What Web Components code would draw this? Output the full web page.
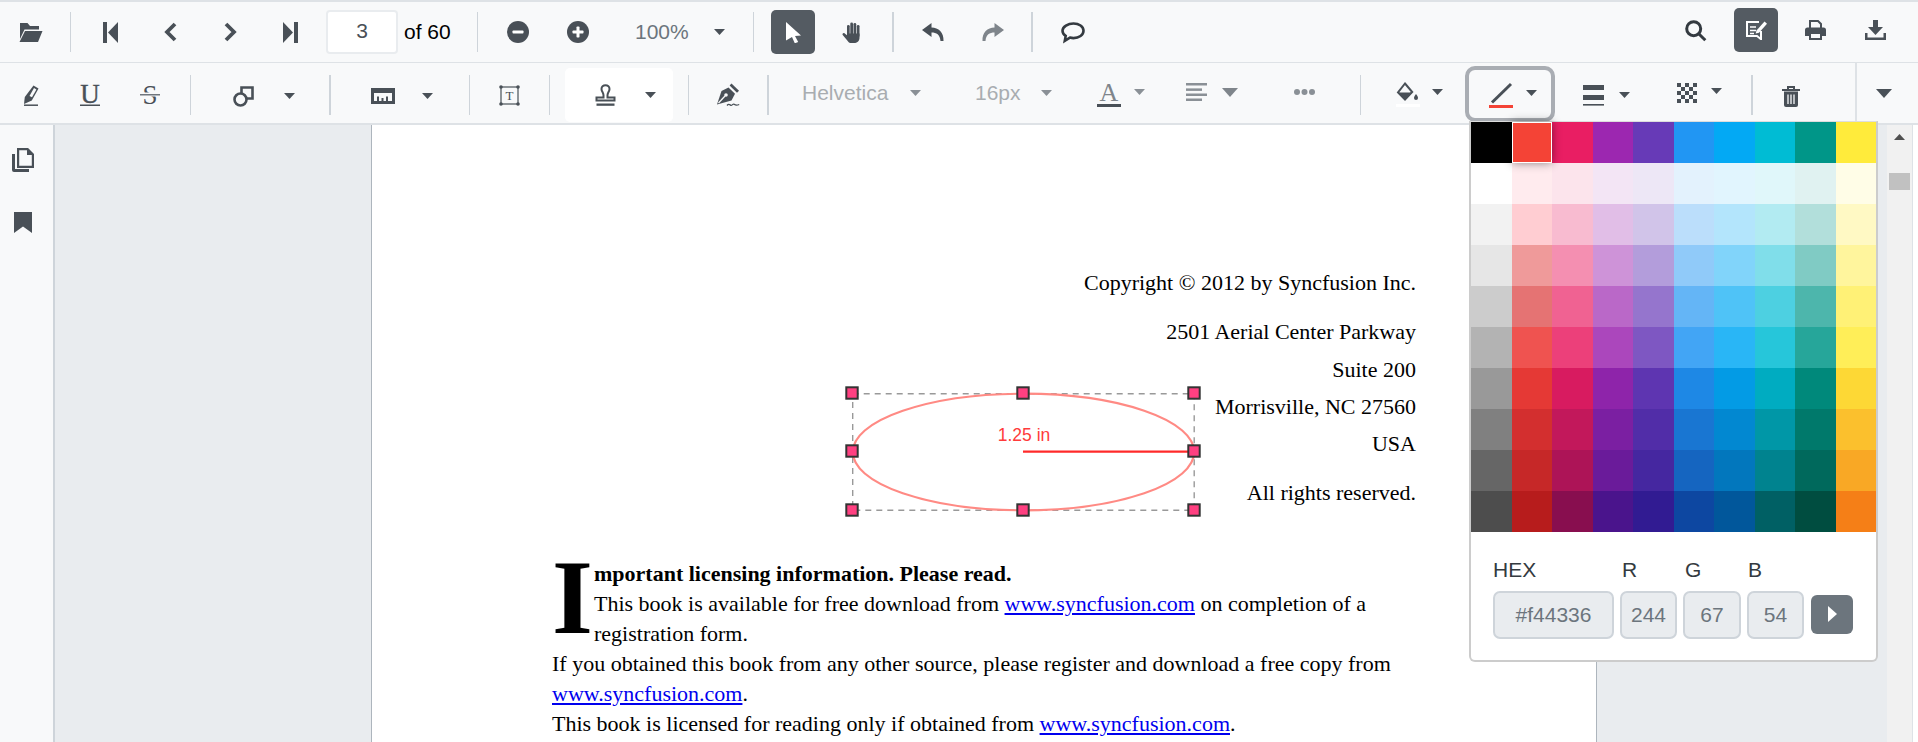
<!DOCTYPE html>
<html><head><meta charset="utf-8"><title>PDF Viewer</title>
<style>html,body{margin:0;padding:0;height:742px;overflow:hidden;background:#fff;font-family:"Liberation Sans",Arial,sans-serif}</style>
</head><body>
<pv-app></pv-app>
<script>
const D='#495057';
const ICONS={
 open:[24,20,`<path fill="${D}" d="M1 1h7.5l2.5 3h9v3.5H5.5L1 17z"/><path fill="${D}" d="M6 9h17.5L19 20H0.5z"/>`],
 first:[15,21,`<rect width="4" height="21" fill="${D}"/><path fill="${D}" d="M15 0v21L5 10.5z"/>`],
 last:[15,21,`<rect x="11" width="4" height="21" fill="${D}"/><path fill="${D}" d="M0 0v21l10-10.5z"/>`],
 prev:[13,20,`<path fill="none" stroke="${D}" stroke-width="3.8" d="M11 2 3 10l8 8"/>`],
 next:[13,20,`<path fill="none" stroke="${D}" stroke-width="3.8" d="M2 2l8 8-8 8"/>`],
 zout:[22,22,`<circle cx="11" cy="11" r="11" fill="${D}"/><rect x="5.5" y="9.5" width="11" height="3" rx=".8" fill="#fff"/>`],
 zin:[22,22,`<circle cx="11" cy="11" r="11" fill="${D}"/><rect x="5.5" y="9.5" width="11" height="3" rx=".8" fill="#fff"/><rect x="9.5" y="5.5" width="3" height="11" rx=".8" fill="#fff"/>`],
 arrow:[11,6,`<path fill="${D}" d="M0 0h11L5.5 6z"/>`],
 arrowg:[11,6,`<path fill="#8a9096" d="M0 0h11L5.5 6z"/>`],
 arrowb:[16,9,`<path fill="#7f858b" d="M0 0h16L8 9z"/>`],
 arrowx:[16,9,`<path fill="${D}" d="M0 0h16L8 9z"/>`],
 cursor:[15,21,`<path fill="#fff" d="M0 0l15 13.5-6 .6 3.2 6-3.4 1.2L6 15l-6 3.5z"/>`],
 hand:[20,21,`<g fill="${D}"><rect x="5" y="3" width="2.7" height="11" rx="1.3"/><rect x="8.3" y=".5" width="2.7" height="13" rx="1.3"/><rect x="11.5" y="1" width="2.7" height="13" rx="1.3"/><rect x="14.8" y="3" width="2.7" height="12" rx="1.3"/><path d="M5 11.5h12.5V16c0 3-2.5 5-5.5 5H9.5c-2 0-3.3-1-4.2-2.6L.7 13c-.9-1.2.8-2.7 2-1.6L5 13.2z"/></g>`],
 undo:[22,18,`<path fill="${D}" d="M9.5 0 0 7l9.5 7V9.5c5 0 8.5 2 9 8.5H21.500C22 9.5 16.5 4.5 9.5 4.5z"/>`],
 redo:[22,18,`<path fill="#7f858b" d="M12.5 0 22 7l-9.5 7V9.5c-5 0-8.5 2-9 8.5H.5C0 9.5 5.5 4.5 12.5 4.5z"/>`],
 comment:[24,21,`<path fill="none" stroke="#343a40" stroke-width="2.6" d="M12.500 1.500c5.500 0 10 3 10 7.300s-4.500 7.300-10 7.300c-1.300 0-2.500-.2-3.600-.5L3.800 18.800l.9-4.900c-2-1.300-3.200-3.100-3.200-5.100 0-4.300 5.500-7.300 11-7.300z"/>`],
 search:[21,21,`<circle cx="8.700" cy="8.700" r="7" fill="none" stroke="#343a40" stroke-width="3"/><path stroke="#343a40" stroke-width="3" d="M13.500 13.500l6.800 6.800"/>`],
 edit:[21,20,`<g fill="none" stroke="#fff"><path stroke-width="2" d="M13 2H1v14h10l4 3.200V11"/><path stroke-width="1.700" d="M4 7h6M4 10.500h6M4 13.500h4"/></g><path fill="#fff" d="M10.500 10.500 18.500 1.500l2.500 2.200-8 9-3.300.9z"/>`],
 print:[21,20,`<g fill="none" stroke="${D}" stroke-width="2"><path d="M5 8V1h8l3 3v4"/><rect x="5" y="13" width="11" height="6"/></g><path fill="${D}" d="M2.500 7.500h16a2.500 2.500 0 0 1 2.500 2.500v6h-4v-4H4v4H0v-6a2.500 2.500 0 0 1 2.500-2.500z"/>`],
 download:[21,20,`<path fill="${D}" d="M8 0h5v7h5l-7.500 8L3 7h5z"/><path fill="${D}" d="M0 13h2.500v4.500h16V13H21v7H0z"/>`],
 hl:[16,21,`<path fill="${D}" d="M10.500.5 15.500 3.500 8.800 15.500 1 19 1.800 12z"/><path fill="#f8f9fa" d="M11 3 13.400 4.500 9 12.300 6.500 11z"/><path stroke="${D}" stroke-width="1.500" d="M1 20.200h14"/>`],
 u:[24,24,`<text x="12" y="20" text-anchor="middle" font-family="Liberation Serif" font-size="27" stroke="${D}" stroke-width=".35" fill="${D}">U</text><rect x="2" y="21.500" width="20" height="1.500" fill="${D}"/>`],
 s:[24,24,`<text x="12" y="20.500" text-anchor="middle" font-family="Liberation Serif" font-size="27" fill="${D}">S</text><rect x="2" y="9.500" width="20" height="4" fill="#f8f9fa"/><rect x="2" y="11" width="20" height="1.500" fill="#6f767d"/>`],
 shape:[21,21,`<g fill="none" stroke="${D}" stroke-width="2.600"><path d="M8.500 7V1.500h11v11h-6"/><circle cx="7.500" cy="13.500" r="6"/></g>`],
 ruler:[24,16,`<path fill="${D}" fill-rule="evenodd" d="M0 0h24v16H0zM3 5v8h18V5z"/><path fill="${D}" d="M6 8.500h2V13H6zM10.500 10h2v3h-2zM15 8.500h2V13h-2z"/>`],
 tbox:[21,21,`<g fill="none" stroke="${D}" stroke-width="1.200"><rect x="2" y="2" width="17" height="17"/></g><g fill="${D}"><circle cx="2" cy="2" r="1.800"/><circle cx="19" cy="2" r="1.800"/><circle cx="2" cy="19" r="1.800"/><circle cx="19" cy="19" r="1.800"/></g><text x="10.500" y="15" text-anchor="middle" font-family="Liberation Serif" font-size="13" fill="${D}">T</text>`],
 stamp:[21,22,`<path fill="none" stroke="${D}" stroke-width="2" d="M10.500 1.200c-2.300 0-4 1.700-4 3.800 0 2.600 2 3.600 2 6.300V13.500H1.500v3h18v-3h-7v-2.200c0-2.700 2-3.700 2-6.300 0-2.100-1.700-3.800-4-3.800z"/><rect x="1.500" y="19.500" width="18" height="2.300" fill="${D}"/>`],
 sign:[24,24,`<path fill="${D}" d="M15.500.5l7.500 7.300-2 1.900-7.400-7.300z"/><path fill="${D}" d="M12.500 4.500l6.500 6.300-3.500 6.700L1 21.500 5.500 8z"/><path stroke="#f8f9fa" stroke-width="1.300" d="M2.500 20 9 13"/><circle cx="10" cy="12" r="1.800" fill="#f8f9fa"/><path fill="none" stroke="${D}" stroke-width="1.300" d="M11 22.500c2-2.500 3-.2 4.200-.2s1.800-2 3-1 2 1.500 5 .2"/>`],
 tA:[24,25,`<text x="12" y="18.500" text-anchor="middle" font-family="Liberation Serif" font-size="26" fill="#7f858b">A</text><rect y="22" width="24" height="3" fill="${D}"/>`],
 align:[21,18,`<g fill="#8a9096"><rect width="21" height="2.500"/><rect y="5.400" width="16" height="2.500"/><rect y="10.500" width="21" height="2.500"/><rect y="15.500" width="16" height="2.500"/></g>`],
 dots:[21,6,`<g fill="#8a9096"><circle cx="3" cy="3" r="3"/><circle cx="10.500" cy="3" r="3"/><circle cx="18" cy="3" r="3"/></g>`],
 fill:[24,25,`<path fill="none" stroke="${D}" stroke-width="2" d="M9 1.500 16.200 10 9 17.500 2 10.500z"/><path fill="${D}" d="M2 10.500h14.500L9 18z"/><path fill="${D}" d="M20 12c1 1.500 2 2.700 2 4a2 2 0 0 1-4 0c0-1.300 1-2.500 2-4z"/><rect y="22" width="24" height="3" fill="#fff"/>`],
 line:[24,25,`<path stroke="${D}" stroke-width="3" d="M22 1 3 19.500"/><rect y="22" width="24" height="3" fill="#f44336"/>`],
 thick:[21,21,`<g fill="${D}"><rect width="21" height="5"/><rect y="10" width="21" height="5"/><rect y="19" width="21" height="1.600"/></g>`],
 checker:[20,20,`<g fill="${D}">`+[0,1,2,3,4].map(r=>[0,1,2,3,4].filter(c=>(r+c)%2==0).map(c=>`<rect x="${c*4}" y="${r*4}" width="4" height="4"/>`).join('')).join('')+`</g>`],
 trash:[18,21,`<path stroke="${D}" stroke-width="2" fill="none" d="M0 4h18M6 3.500V1h6v2.500"/><path fill="${D}" d="M2 5.500h14V19a2 2 0 0 1-2 2H4a2 2 0 0 1-2-2z"/><path stroke="#f8f9fa" stroke-width="1.300" d="M6 8.500v9.500M9 8.500v9.500M12 8.500v9.500"/>`],
 pages:[22,24,`<path fill="${D}" d="M0 6h3v15h14v3H2a2 2 0 0 1-2-2z"/><path fill="#f8f9fa" stroke="${D}" stroke-width="2.200" d="M6.100 1.100h9.500l5.300 5.300v12.500H6.100z"/><path fill="${D}" d="M15 1h1l5 5v1h-6z"/>`],
 bookmark:[18,21,`<path fill="${D}" d="M0 0h18v21l-9-6.500L0 21z"/>`],
};
class Base extends HTMLElement{
 constructor(){super();this.attachShadow({mode:'open'});}
 a(n,d){return this.hasAttribute(n)?this.getAttribute(n):d;}
 box(){const w=this.a('w');if(w)this.style.width=w+'px';const m=this.a('ml');if(m)this.style.marginLeft=m+'px';}
}
class PvTool extends Base{connectedCallback(){this.box();const ic=ICONS[this.a('i')];const dy=+this.a('dy',0);
 this.shadowRoot.innerHTML=`<style>:host{display:flex;flex:none;align-items:center;justify-content:center;height:100%}svg{display:block;margin-top:${dy*2}px;overflow:visible}</style><svg width="${ic[0]}" height="${ic[1]}" viewBox="0 0 ${ic[0]} ${ic[1]}">${ic[2]}</svg>`;}}
class PvSep extends Base{connectedCallback(){this.box();const h=this.a('h',40),t=this.a('t',1),dy=+this.a('dy',0);
 this.shadowRoot.innerHTML=`<style>:host{display:flex;flex:none;align-items:center;justify-content:center;height:100%}i{display:block;width:${t}px;height:${h}px;background:${this.a('c','#ced4da')};margin-top:${dy*2}px}</style><i></i>`;}}
class PvLabel extends Base{connectedCallback(){this.box();const c=this.a('c','#000'),dy=+this.a('dy',0);
 this.shadowRoot.innerHTML=`<style>:host{display:flex;flex:none;align-items:center;height:100%;font:21px "Liberation Sans",Arial,sans-serif;color:${c};white-space:nowrap}span{margin-top:${dy*2}px}</style><span><slot></slot></span>`;}}
class PvPageInput extends Base{connectedCallback(){this.box();
 this.shadowRoot.innerHTML=`<style>:host{display:flex;flex:none;align-items:center;justify-content:center;box-sizing:border-box;height:44px;background:#fff;border:2px solid #e9ecef;border-radius:4px;font:21px "Liberation Sans",Arial,sans-serif;color:#495057}span{margin-top:-3px}</style><span><slot></slot></span>`;}}
class PvActive extends Base{connectedCallback(){this.box();const ic=ICONS[this.a('i')];const dy=+this.a('dy',0);
 this.shadowRoot.innerHTML=`<style>:host{display:flex;flex:none;align-items:center;justify-content:center;height:44px;background:#545b62;border-radius:5px;margin-top:${dy*2}px}svg{display:block}</style><svg width="${ic[0]}" height="${ic[1]}" viewBox="0 0 ${ic[0]} ${ic[1]}">${ic[2]}</svg>`;}}
class PvToolbar extends Base{connectedCallback(){this.shadowRoot.innerHTML=`<style>:host{display:flex;align-items:center;box-sizing:border-box;height:${this.a('h',60)}px;background:#f8f9fa;border-bottom:${this.a('b',1)}px solid #dee2e6}</style><slot></slot>`;}}
class PvGroup extends Base{connectedCallback(){this.box();
 this.shadowRoot.innerHTML=`<style>:host{display:flex;flex:none;align-items:center;height:${this.a('h','100%')}${this.a('h')?'px':''};box-sizing:border-box;${this.a('css','')}}</style><slot></slot>`;}}
class PvSidebar extends Base{connectedCallback(){this.shadowRoot.innerHTML=`<style>:host{display:flex;flex:none;flex-direction:column;align-items:center;box-sizing:border-box;width:55px;background:#f8f9fa;border-right:2px solid #ced4da;padding:23px 7px 0 0;gap:40px}svg{display:block}</style>
 ${['pages','bookmark'].map(n=>`<svg width="${ICONS[n][0]}" height="${ICONS[n][1]}" viewBox="0 0 ${ICONS[n][0]} ${ICONS[n][1]}">${ICONS[n][2]}</svg>`).join('')}`;}}
class PvScrollbar extends Base{connectedCallback(){this.shadowRoot.innerHTML=`<style>:host{display:flex;flex:none;flex-direction:column;align-items:center;box-sizing:content-box;width:25px;background:#f1f1f1;border-right:1px solid #dee2e6}svg{display:block;margin-top:9px}.t{width:21px;height:17px;background:#c1c1c1;margin-top:33px}</style><svg width="11" height="6"><path d="M0 6h11L5.500 0z" fill="#505050"/></svg><div class="t"></div>`;}}
class PvPage extends Base{connectedCallback(){this.shadowRoot.innerHTML=`<style>
:host{display:block;flex:none;box-sizing:border-box;width:1226px;height:100%;background:#fff;border-left:1px solid #adb5bd;border-right:1px solid #adb5bd;padding:143px 0 0 180px;position:relative;font:22px/30px "Liberation Serif","Times New Roman",serif;color:#000;overflow:hidden}
.addr{width:864px;text-align:right}
.addr p{margin:0;white-space:nowrap}
.body{margin-top:51px;width:900px;white-space:nowrap}
.cap{float:left;width:42px;height:88px;font-weight:bold;font-size:105px;line-height:77px}
a{color:#00e;text-decoration:underline}
svg{position:absolute;left:0;top:0;overflow:visible}
</style>
<div class="addr"><p>Copyright © 2012 by Syncfusion Inc.</p><p style="margin-top:19px">2501 Aerial Center Parkway</p><p style="margin-top:8px">Suite 200</p><p style="margin-top:7px">Morrisville, NC 27560</p><p style="margin-top:7px">USA</p><p style="margin-top:19px">All rights reserved.</p></div>
<div class="body"><span class="cap">I</span><b>mportant licensing information. Please read.</b><br>This book is available for free download from <a>www.syncfusion.com</a> on completion of a<br>registration form.<br>If you obtained this book from any other source, please register and download a free copy from<br><a>www.syncfusion.com</a>.<br>This book is licensed for reading only if obtained from <a>www.syncfusion.com</a>.</div>
<svg width="1226" height="617" viewBox="372 125 1226 617">
<rect x="852.700" y="393.700" width="341.500" height="116.600" fill="none" stroke="#999" stroke-width="1.400" stroke-dasharray="6 5"/>
<ellipse cx="1023.500" cy="452" rx="170.700" ry="58.300" fill="none" stroke="#ff8a84" stroke-width="2.200"/>
<path d="M1023 451.700H1194" stroke="#ff2a2a" stroke-width="2.200"/>
<text x="1024" y="440.700" text-anchor="middle" font-family="Liberation Sans" font-size="17.500" fill="#ff3b3b">1.25 in</text>
${[[852,393],[1023,393],[1194,393],[852,451],[1194,451],[852,510],[1023,510],[1194,510]].map(p=>`<rect x="${p[0]-5.7}" y="${p[1]-5.7}" width="11.400" height="11.400" fill="#ff4081" stroke="#333" stroke-width="2"/>`).join('')}
</svg>`;}}
const PAL=[
['#000000','#f44336','#e91e63','#9c27b0','#673ab7','#2196f3','#03a9f4','#00bcd4','#009688','#ffeb3b'],
['#ffffff','#ffebee','#fce4ec','#f3e5f5','#ede7f6','#e3f2fd','#e1f5fe','#e0f7fa','#e0f2f1','#fffde7'],
['#f2f2f2','#ffcdd2','#f8bbd0','#e1bee7','#d1c4e9','#bbdefb','#b3e5fc','#b2ebf2','#b2dfdb','#fff9c4'],
['#e6e6e6','#ef9a9a','#f48fb1','#ce93d8','#b39ddb','#90caf9','#81d4fa','#80deea','#80cbc4','#fff59d'],
['#cccccc','#e57373','#f06292','#ba68c8','#9575cd','#64b5f6','#4fc3f7','#4dd0e1','#4db6ac','#fff176'],
['#b3b3b3','#ef5350','#ec407a','#ab47bc','#7e57c2','#42a5f5','#29b6f6','#26c6da','#26a69a','#ffee58'],
['#999999','#e53935','#d81b60','#8e24aa','#5e35b1','#1e88e5','#039be5','#00acc1','#00897b','#fdd835'],
['#808080','#d32f2f','#c2185b','#7b1fa2','#512da8','#1976d2','#0288d1','#0097a7','#00796b','#fbc02d'],
['#666666','#c62828','#ad1457','#6a1b9a','#4527a0','#1565c0','#0277bd','#00838f','#00695c','#f9a825'],
['#4d4d4d','#b71c1c','#880e4f','#4a148c','#311b92','#0d47a1','#01579b','#006064','#004d40','#f57f17']];
class PvPicker extends Base{connectedCallback(){this.shadowRoot.innerHTML=`<style>
:host{position:absolute;left:1469px;top:119px;width:409px;box-sizing:border-box;background:#fff;border:2px solid #ccc;border-top:1px solid #ddd;border-radius:0 0 6px 6px;z-index:5;font:21px "Liberation Sans",Arial,sans-serif}
.g{display:grid;grid-template-columns:repeat(10,40.5px);grid-auto-rows:41px}
.g i{display:block;position:relative}
.g i.s{box-shadow:0 0 9px rgba(0,0,0,.45);outline:1px solid #fff;outline-offset:-1px;z-index:1}
.low{padding:26px 0 21px 22px}
.l{display:flex;height:24px;line-height:24px;color:#343a40}
.l span{display:block}
.r{display:flex;align-items:center;margin-top:9px;height:48px}
.f{box-sizing:border-box;height:48px;display:flex;align-items:center;justify-content:center;background:#e9ecef;border:2px solid #ced4da;border-radius:7px;color:#6c757d;flex:none}
.b{width:42px;height:39px;flex:none;background:#6c757d;border-radius:6px;display:flex;align-items:center;justify-content:center;margin:-2px 0 0 7px}
</style>
<div class="g">${PAL.flat().map(c=>`<i style="background:${c}" class="${c=='#f44336'?'s':''}"></i>`).join('')}</div>
<div class="low"><div class="l"><span style="width:129px">HEX</span><span style="width:63px">R</span><span style="width:63px">G</span><span>B</span></div>
<div class="r"><div class="f" style="width:121px">#f44336</div><div class="f" style="width:57px;margin-left:6px">244</div><div class="f" style="width:58px;margin-left:6px">67</div><div class="f" style="width:57px;margin-left:6px">54</div><div class="b"><svg width="9" height="16"><path d="M0 0l9 8-9 8z" fill="#fff"/></svg></div></div></div>`;}}
class PvApp extends Base{connectedCallback(){this.shadowRoot.innerHTML=`<style>
:host{display:flex;flex-direction:column;position:relative;width:1918px;height:742px;overflow:hidden;box-sizing:border-box;border-top:2px solid #dee2e6}
.main{display:flex;flex:1;min-height:0}
.gray{flex:1;display:flex;background:#e9ecef;padding-left:316px;min-width:0}
.sp{flex:1}
.lb{align-self:flex-start;margin-top:3px;height:56px;width:90px;box-sizing:border-box;border:4px solid #a9adb3;border-radius:10px;padding-left:14px;margin-left:17px;display:flex;flex:none;align-items:center}
</style>
<pv-toolbar h="61" b="1">
<pv-tool w="61" i="open"></pv-tool><pv-sep w="18"></pv-sep>
<pv-tool w="62" i="first"></pv-tool><pv-tool w="58" i="prev"></pv-tool><pv-tool w="62" i="next"></pv-tool><pv-tool w="58" i="last"></pv-tool>
<pv-page-input w="72" ml="7">3</pv-page-input><pv-label w="60" ml="6">of 60</pv-label>
<pv-sep w="27"></pv-sep><pv-tool w="53" i="zout"></pv-tool><pv-tool w="67" i="zin"></pv-tool>
<pv-label w="54" ml="24" c="#6c757d">100%</pv-label><pv-tool w="60" i="arrow"></pv-tool><pv-sep w="9"></pv-sep>
<pv-active w="44" ml="13" i="cursor"></pv-active><pv-tool w="74" i="hand"></pv-tool><pv-sep w="8" t="2"></pv-sep>
<pv-tool w="72" i="undo"></pv-tool><pv-tool w="48" i="redo"></pv-tool><pv-sep w="30" t="2"></pv-sep><pv-tool w="51" i="comment"></pv-tool>
<span class="sp"></span>
<pv-tool w="48" i="search" dy="-2"></pv-tool><pv-active w="44" ml="15" i="edit" dy="-2"></pv-active><pv-tool w="75" i="print" dy="-2"></pv-tool><pv-tool w="45" i="download" dy="-2"></pv-tool><span style="width:20px;flex:none"></span>
</pv-toolbar>
<pv-toolbar h="62" b="2">
<pv-tool w="61" i="hl" dy="2"></pv-tool><pv-tool w="58" i="u" dy="2"></pv-tool><pv-tool w="62" i="s" dy="2"></pv-tool><pv-sep w="18" dy="1.500"></pv-sep>
<pv-tool w="61" ml="14" i="shape" dy="3"></pv-tool><pv-tool w="30" i="arrow" dy="2.500"></pv-tool><pv-sep w="52" dy="1.500" t="2"></pv-sep>
<pv-tool w="54" i="ruler" dy="3"></pv-tool><pv-tool w="34" i="arrow" dy="2.500"></pv-tool><pv-sep w="50" dy="1.500"></pv-sep>
<pv-tool w="30" i="tbox" dy="2"></pv-tool><pv-sep w="32" ml="9" dy="1.500"></pv-sep>
<pv-group w="108" h="54" css="background:#fff;border-radius:5px;margin-top:4px"><pv-tool w="80" i="stamp"></pv-tool><pv-tool w="10" i="arrow"></pv-tool></pv-group>
<pv-sep w="31" dy="1.500"></pv-sep><pv-tool w="48" i="sign" dy="2"></pv-tool><pv-sep w="32" dy="1.500" t="2"></pv-sep>
<pv-label w="86" ml="18" c="#a9adb1">Helvetica</pv-label><pv-tool w="54" i="arrowg"></pv-tool>
<pv-label w="45" ml="33" c="#a9adb1">16px</pv-label><pv-tool w="53" i="arrowg"></pv-tool>
<pv-tool w="38" ml="17" i="tA" dy="1"></pv-tool><pv-tool w="22" i="arrowg" dy="-1"></pv-tool>
<pv-tool w="53" ml="20" i="align" dy="-1"></pv-tool><pv-tool w="14" i="arrowb" dy="-1"></pv-tool>
<pv-tool w="40" ml="47" i="dots" dy="-1"></pv-tool><pv-sep w="18" ml="27" dy="1.500"></pv-sep>
<pv-tool w="38" ml="20" i="fill" dy="1"></pv-tool><pv-tool w="21" i="arrow" dy="-1"></pv-tool>
<div class="lb"><pv-tool w="36" i="line" dy="1"></pv-tool><pv-tool w="24" i="arrow" dy="-1"></pv-tool></div>
<pv-tool w="39" ml="19" i="thick" dy="2"></pv-tool><pv-tool w="22" i="arrow" dy="2"></pv-tool>
<pv-tool w="39" ml="32" i="checker"></pv-tool><pv-tool w="20" i="arrow" dy="-2"></pv-tool>
<pv-sep w="18" ml="17" t="2" dy="1.500"></pv-sep><pv-tool w="40" ml="10" i="trash" dy="3"></pv-tool>
<pv-sep w="18" ml="36" h="60" t="2" c="#dee2e6"></pv-sep><pv-tool w="38" i="arrowx"></pv-tool>
</pv-toolbar>
<div class="main"><pv-sidebar></pv-sidebar><div class="gray"><pv-page></pv-page></div><pv-scrollbar></pv-scrollbar><span style="width:5px;flex:none;background:#fff"></span></div>
<pv-picker></pv-picker>`;}}
customElements.define('pv-tool',PvTool);customElements.define('pv-sep',PvSep);customElements.define('pv-label',PvLabel);
customElements.define('pv-page-input',PvPageInput);customElements.define('pv-active',PvActive);customElements.define('pv-toolbar',PvToolbar);
customElements.define('pv-group',PvGroup);customElements.define('pv-sidebar',PvSidebar);customElements.define('pv-scrollbar',PvScrollbar);
customElements.define('pv-page',PvPage);customElements.define('pv-picker',PvPicker);customElements.define('pv-app',PvApp);
</script></body></html>
